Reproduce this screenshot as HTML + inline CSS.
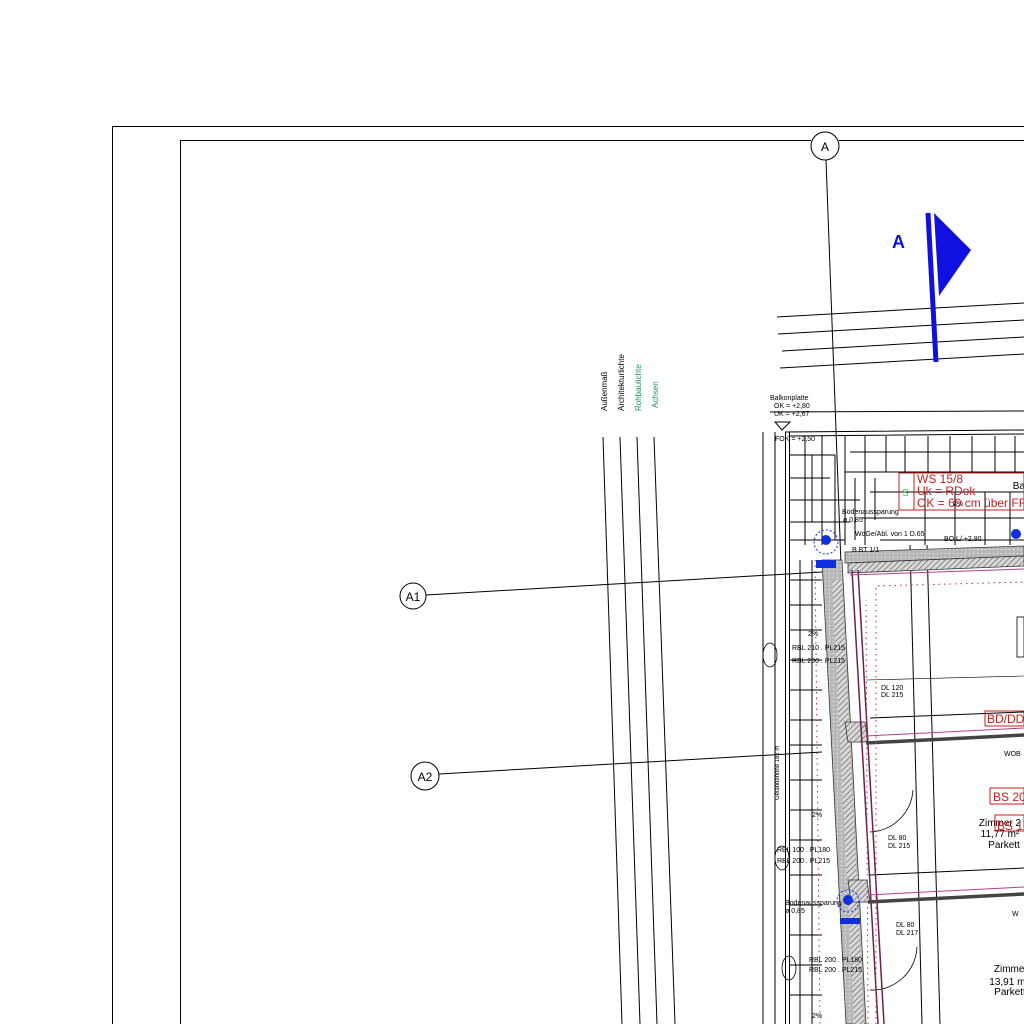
<!DOCTYPE html>
<html><head><meta charset="utf-8"><style>
html,body{margin:0;padding:0;background:#fff;width:1024px;height:1024px;overflow:hidden}
svg{display:block}
text{font-family:"Liberation Sans",sans-serif}
</style></head><body>
<svg width="1024" height="1024" viewBox="0 0 1024 1024" xmlns="http://www.w3.org/2000/svg">
<defs>
<pattern id="h" width="4" height="4" patternUnits="userSpaceOnUse" patternTransform="rotate(45)">
<rect width="4" height="4" fill="#d8d8d8"/><line x1="0" y1="0" x2="0" y2="4" stroke="#555" stroke-width="1.2"/></pattern>
<pattern id="g" width="4" height="4" patternUnits="userSpaceOnUse">
<rect width="4" height="4" fill="#b8b8b8"/><rect x="1" y="1" width="1" height="1" fill="#fff"/></pattern>
</defs>
<g fill="none" stroke="#000" stroke-width="1">
<path d="M112.5 1024V126.5H1024"/>
<path d="M180.5 1024V140.5H811"/>
<path d="M839 140.5H1024"/>
<circle cx="825" cy="146" r="14"/>
<line x1="826" y1="160" x2="858" y2="1024"/>
<line x1="777" y1="317" x2="1024" y2="303"/>
<line x1="778" y1="334" x2="1024" y2="320"/>
<line x1="782" y1="351" x2="1024" y2="337"/>
<line x1="780" y1="368" x2="1024" y2="354"/>
<line x1="603" y1="437" x2="622" y2="1024"/>
<line x1="620" y1="437" x2="640" y2="1024"/>
<line x1="637" y1="437" x2="657" y2="1024"/>
<line x1="654" y1="437" x2="675" y2="1024"/>
<circle cx="413" cy="596" r="13"/><line x1="426" y1="595" x2="822" y2="572"/>
<circle cx="425" cy="776" r="14"/><line x1="439" y1="774" x2="822" y2="752"/>
<line x1="763" y1="432" x2="763" y2="1024"/>
<path d="M775 432V1024M785.5 432V1024M789.5 432V1024"/>
<path d="M785 432L1024 430M789 436L1024 434"/>
<path d="M775 422L790 422L782 430Z"/>
<line x1="770" y1="412" x2="1024" y2="411"/>
<g stroke-width="1">
<path d="M790 455H835M850 452H1024M790 478H830M845 472H1024M790 500H860M870 492H1024M790 522H850M862 518H1024M790 540H845M880 540H1024"/>
<path d="M805 436V545M822 436V545M845 436V545M865 436V545M886 436V472M905 436V472M928 436V472M950 436V472M972 436V472M995 436V472M1015 436V472M925 492V545M955 492V545M985 492V545M1010 492V545M812 455V522M835 455V540M855 478V540M875 478V520"/>
<path d="M790 580H822M790 605H822M790 630H822M790 660H822M790 690H822M790 720H822M790 745H822M790 780H822M790 810H822M790 840H822M790 875H822M790 905H822M790 935H822M790 965H822M790 995H822"/>
<path d="M800 560V1024M812 560V1024"/>
</g>
<line x1="910" y1="545" x2="922" y2="1024"/>
<line x1="927" y1="545" x2="940" y2="1024"/>
<line x1="870" y1="718" x2="1024" y2="712"/>
<line x1="870" y1="875" x2="1024" y2="868"/>
<path d="M870 832A45 45 0 0 0 913 790M870 990A45 45 0 0 0 917 947" stroke-width="0.8"/>
<line x1="866" y1="680" x2="1024" y2="676" stroke-width="0.6"/>
</g>
<path d="M845 552L1024 546L1024 556L845 563Z" fill="url(#g)" stroke="#333" stroke-width="0.8"/>
<path d="M848 563L1024 556L1024 566L848 573Z" fill="url(#h)" stroke="#333" stroke-width="0.8"/>
<path d="M822 560L842 560L866 1024L846 1024Z" fill="url(#g)" stroke="#333" stroke-width="0.8"/>
<path d="M832 580L842 580L864 1024L854 1024Z" fill="url(#h)" stroke="none"/>
<path d="M845 722L865 722L868 742L848 742Z M848 880L867 880L870 902L851 902Z" fill="url(#h)" stroke="#333" stroke-width="0.8"/>
<g stroke="#6a2050" fill="none" stroke-width="1.5">
<line x1="852" y1="570" x2="878" y2="1024"/>
<line x1="858" y1="570" x2="884" y2="1024"/>
</g>
<g stroke="#444" stroke-width="3.5"><line x1="866" y1="743" x2="1024" y2="735"/><line x1="868" y1="902" x2="1024" y2="894"/></g>
<g stroke="#b04090" stroke-width="1"><line x1="866" y1="736" x2="1024" y2="728"/><line x1="868" y1="895" x2="1024" y2="887"/><line x1="850" y1="575" x2="1024" y2="569"/></g>
<g stroke="#c03030" stroke-width="1" stroke-dasharray="1.5 4" fill="none">
<path d="M876 1024V586L1024 582"/><line x1="815" y1="560" x2="820" y2="1024"/><line x1="868" y1="1024" x2="866" y2="600"/>
</g>
<line x1="928" y1="213" x2="936" y2="362" stroke="#1010e0" stroke-width="5"/>
<path d="M934 213L971 250L939 296Z" fill="#1010e0"/>
<text x="892" y="248" font-size="18" font-weight="bold" fill="#1010e0">A</text>
<g fill="#1030e0"><circle cx="826" cy="540" r="5"/><circle cx="1016" cy="534" r="5"/><circle cx="848" cy="900" r="5"/>
<rect x="816" y="560" width="20" height="8"/><rect x="840" y="918" width="20" height="6"/></g>
<g fill="none" stroke="#1030e0" stroke-dasharray="2 2"><circle cx="826" cy="542" r="12"/><circle cx="848" cy="901" r="11"/></g>
<g font-size="8" transform="rotate(-90)">
<text x="-411" y="607" fill="#000">Außenmaß</text>
<text x="-411" y="624" fill="#000">Architekturlichte</text>
<text x="-411" y="641" fill="#1a9a5a">Rohbaulichte</text>
<text x="-408" y="658" fill="#1a9a5a">Achsen</text>
<text x="-800" y="779" fill="#000" font-size="6">Geländehöhe 182 m</text>
</g>
<g font-size="12" text-anchor="middle"><text x="825" y="151">A</text><text x="413" y="601">A1</text><text x="425" y="781">A2</text></g>
<g font-size="7" fill="#000">
<text x="770" y="400">Balkonplatte</text><text x="774" y="408">OK = +2,80</text><text x="774" y="416">UK = +2,67</text>
<text x="775" y="441">FOK = +2,50</text>
<text x="842" y="514">Bodenaussparung</text><text x="843" y="522">ø 0,85</text>
<text x="855" y="536">WoGe/Abl. von 1 D.65</text><text x="944" y="541">BO L/ +2,80</text>
<text x="852" y="552">B BT 1/1</text>
<text x="792" y="650">RBL 210 . PL215</text><text x="792" y="663">RBL 200 . PL215</text>
<text x="881" y="690">DL 120</text><text x="881" y="697">DL 215</text>
<text x="777" y="852">RBL 100 . PL180</text><text x="777" y="863">RBL 200 . PL215</text>
<text x="888" y="840">DL 80</text><text x="888" y="848">DL 215</text>
<text x="896" y="927">DL 80</text><text x="896" y="935">DL 217</text>
<text x="809" y="962">RBL 200 . PL180</text><text x="809" y="972">RBL 200 . PL215</text>
<text x="785" y="905">Bodenaussparung</text><text x="785" y="913">ø 0,85</text>
<text x="808" y="636">2%</text><text x="812" y="817">2%</text><text x="812" y="1018">2%</text><text x="953" y="506">2%</text>
<text x="1004" y="756">WOB</text><text x="1012" y="916">W</text>
</g>
<g fill="none" stroke="#000" stroke-width="0.8">
<ellipse cx="770" cy="655" rx="7" ry="12"/><ellipse cx="782" cy="858" rx="7" ry="12"/><ellipse cx="789" cy="968" rx="7" ry="12"/>
<rect x="1017" y="617" width="7" height="40"/>
</g>
<g font-size="10" fill="#000" text-anchor="middle">
<text x="1000" y="826">Zimmer 2</text><text x="1000" y="837">11,77 m²</text><text x="1004" y="848">Parkett</text>
<text x="1015" y="972">Zimmer 1</text><text x="1009" y="985">13,91 m²</text><text x="1010" y="995">Parkett</text>
<text x="1020" y="489">Bal</text>
</g>
<g fill="none" stroke="#c81e1e" stroke-width="1">
<rect x="899" y="473" width="125" height="37"/><line x1="914" y1="473" x2="914" y2="510"/>
<rect x="985" y="711" width="39" height="15"/><rect x="990" y="788" width="34" height="16"/><rect x="995" y="815" width="29" height="16"/>
</g>
<g fill="#c81e1e" font-size="12">
<text x="917" y="483">WS 15/8</text><text x="917" y="495">Uk = RDok</text><text x="917" y="507">OK = 60 cm über FF</text>
<text x="987" y="723">BD/DD</text><text x="993" y="801">BS 20</text><text x="997" y="830">BS 1</text>
</g>
<text x="902" y="496" font-size="10" fill="#3ac03a">S</text>
</svg>
</body></html>
